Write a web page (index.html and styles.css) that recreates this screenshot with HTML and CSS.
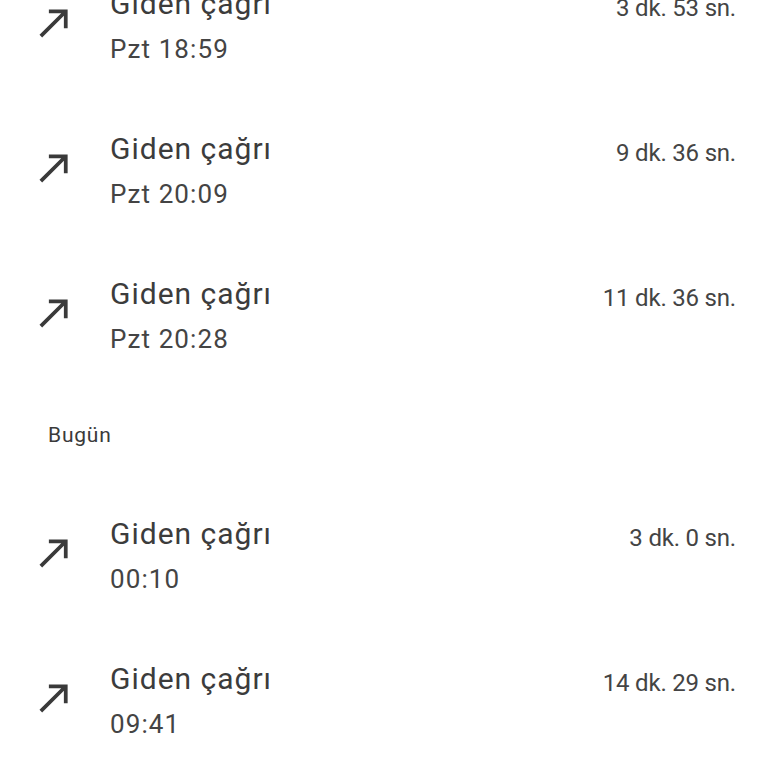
FILE: index.html
```html
<!DOCTYPE html>
<html lang="tr">
<head>
<meta charset="utf-8">
<title>Arama geçmişi</title>
<link rel="stylesheet" href="styles.css">
</head>
<body>
<main class="log">
  <div class="call">
    <svg class="icon" viewBox="0 0 24 24"><path d="M9 5v2h6.59L4 18.59 5.41 20 17 8.41V15h2V5z"/></svg>
    <div class="info"><div class="title">Giden çağrı</div><div class="sub">Pzt 18:59</div></div>
    <div class="dur">3 dk. 53 sn.</div>
  </div>
  <div class="call">
    <svg class="icon" viewBox="0 0 24 24"><path d="M9 5v2h6.59L4 18.59 5.41 20 17 8.41V15h2V5z"/></svg>
    <div class="info"><div class="title">Giden çağrı</div><div class="sub">Pzt 20:09</div></div>
    <div class="dur">9 dk. 36 sn.</div>
  </div>
  <div class="call">
    <svg class="icon" viewBox="0 0 24 24"><path d="M9 5v2h6.59L4 18.59 5.41 20 17 8.41V15h2V5z"/></svg>
    <div class="info"><div class="title">Giden çağrı</div><div class="sub">Pzt 20:28</div></div>
    <div class="dur">11 dk. 36 sn.</div>
  </div>
  <div class="section">Bugün</div>
  <div class="call">
    <svg class="icon" viewBox="0 0 24 24"><path d="M9 5v2h6.59L4 18.59 5.41 20 17 8.41V15h2V5z"/></svg>
    <div class="info"><div class="title">Giden çağrı</div><div class="sub">00:10</div></div>
    <div class="dur">3 dk. 0 sn.</div>
  </div>
  <div class="call">
    <svg class="icon" viewBox="0 0 24 24"><path d="M9 5v2h6.59L4 18.59 5.41 20 17 8.41V15h2V5z"/></svg>
    <div class="info"><div class="title">Giden çağrı</div><div class="sub">09:41</div></div>
    <div class="dur">14 dk. 29 sn.</div>
  </div>
</main>
</body>
</html>
```

FILE: styles.css
```css
html, body {
  margin: 0;
  padding: 0;
  background: #ffffff;
  overflow: hidden;
}
body {
  font-family: Roboto, "Noto Sans", sans-serif;
  color: #3c3c3c;
}
.log {
  display: flex;
  flex-direction: column;
  margin-top: -49px;
}
.call {
  height: 145px;
  box-sizing: border-box;
  display: flex;
  align-items: flex-start;
  padding: 35px 32px 0 0;
}
.icon {
  width: 45px;
  height: 45px;
  fill: #3a3a3a;
  margin: 14px 33px 0 32px;
  flex: none;
}
.info {
  flex: 1;
}
.title {
  font-size: 30px;
  line-height: 36px;
  letter-spacing: 1px;
  color: #3c3c3c;
}
.sub {
  font-size: 26px;
  line-height: 32px;
  margin-top: 11px;
  letter-spacing: 1.1px;
  color: #444444;
}
.dur {
  font-size: 24px;
  line-height: 36px;
  margin-top: 4px;
  letter-spacing: -0.2px;
  color: #444444;
}
.section {
  height: 95px;
  box-sizing: border-box;
  padding: 37px 0 0 48px;
  font-size: 21px;
  line-height: 24px;
  letter-spacing: 0.8px;
  color: #3a3a3a;
}
```
